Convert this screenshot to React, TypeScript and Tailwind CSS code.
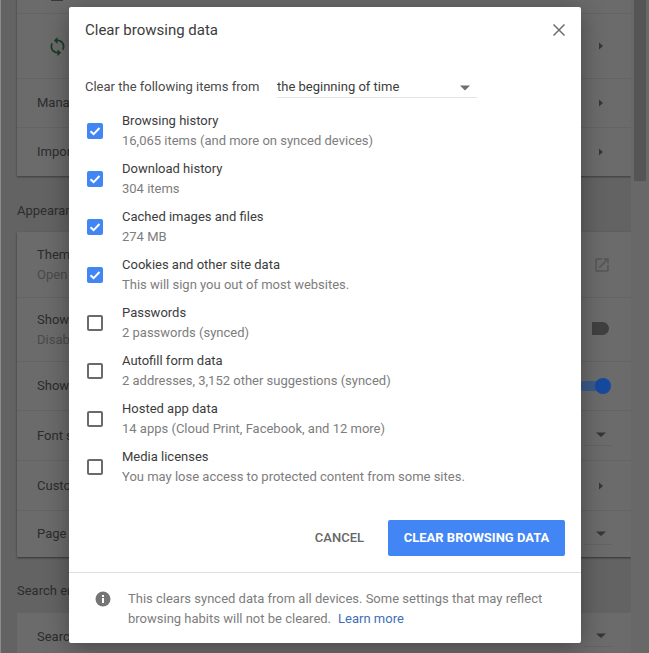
import React from 'react';

const Caret = ({ dir }: { dir: 'right' | 'down' }) => (
    <svg width="12" height="12" viewBox="0 0 12 12" className="text-[#363636]">
        {dir === 'right' ? <path d="M4 2.5 L8 6 L4 9.5 Z" fill="currentColor" /> : <path d="M1 3.5 L11 3.5 L6 8 Z" fill="currentColor" />}
    </svg>
);

// dropdown caret with the faint underline the settings selects have
const DropCaret = () => (
    <span className="mr-[-5px] flex w-[28px] border-b border-[#636363] pb-1 pl-[11px] pt-1">
        <Caret dir="down" />
    </span>
);

interface RowProps {
    height: string;
    title?: string;
    sub?: string;
    right?: React.ReactNode;
    border?: boolean;
}

const BgRow = ({ height, title, sub, right, border = true }: RowProps) => (
    <div className={`flex items-center justify-between pl-5 pr-6 ${height} ${border ? 'border-t border-[#646464]' : ''}`}>
        <div className="leading-5">
            {title && <div className="text-[13px] text-[#2c2c2c]">{title}</div>}
            {sub && <div className="text-[13px] text-[#4a4a4a]">{sub}</div>}
        </div>
        {right}
    </div>
);

const items = [
    { title: 'Browsing history', sub: '16,065 items (and more on synced devices)', checked: true },
    { title: 'Download history', sub: '304 items', checked: true },
    { title: 'Cached images and files', sub: '274 MB', checked: true },
    { title: 'Cookies and other site data', sub: 'This will sign you out of most websites.', checked: true },
    { title: 'Passwords', sub: '2 passwords (synced)', checked: false },
    { title: 'Autofill form data', sub: '2 addresses, 3,152 other suggestions (synced)', checked: false },
    { title: 'Hosted app data', sub: '14 apps (Cloud Print, Facebook, and 12 more)', checked: false },
    { title: 'Media licenses', sub: 'You may lose access to protected content from some sites.', checked: false },
];

const CheckBox = ({ checked }: { checked: boolean }) =>
    checked ? (
        <div className="flex h-4 w-4 items-center justify-center rounded-[2px] bg-[#4285f4]">
            <svg width="12" height="12" viewBox="0 0 12 12">
                <path d="M1.5 6.2 L4.6 9.2 L10.5 3" fill="none" stroke="#ffffff" strokeWidth="2" />
            </svg>
        </div>
    ) : (
        <div className="h-4 w-4 rounded-[2px] border-2 border-[#6a6a6a]" />
    );

export default function App() {
    return (
        <div className="relative h-[653px] w-[649px] overflow-hidden bg-[#636363] font-['Roboto',sans-serif]">
            {/* settings page behind the scrim */}
            <div className="flex h-full">
                <div className="h-full w-[1px] shrink-0 bg-[#8c8c8c]" />
                <div className="w-[630px] shrink-0 pl-4">
                    <div className="mt-[-20px] bg-[#6b6b6b] shadow-[0_1px_2px_rgba(0,0,0,0.4)]">
                        <div className="flex h-[33px] items-start pl-[34px]">
                            <span className="mt-[19px] h-[2px] w-[12px] bg-[#3a3a3a]" />
                        </div>
                        <div className="flex h-[65px] items-center justify-between border-t border-[#646464] pl-[30px] pr-6">
                            <svg width="21" height="21" viewBox="0 0 24 24" fill="#173d29">
                                <path d="M12 4V1L8 5l4 4V6c3.31 0 6 2.69 6 6 0 1.01-.25 1.97-.7 2.8l1.46 1.46C19.54 15.03 20 13.57 20 12c0-4.42-3.58-8-8-8zm0 14c-3.31 0-6-2.69-6-6 0-1.01.25-1.97.7-2.8L5.24 7.74C4.46 8.97 4 10.43 4 12c0 4.42 3.58 8 8 8v3l4-4-4-4v3z" />
                            </svg>
                            <Caret dir="right" />
                        </div>
                        <BgRow height="h-[49px]" title="Manage" right={<Caret dir="right" />} />
                        <BgRow height="h-[49px]" title="Import" right={<Caret dir="right" />} />
                    </div>
                    <div className="flex h-[56px] items-end pb-3 text-[13px] text-[#2c2c2c]">Appearance</div>
                    <div className="bg-[#6b6b6b] shadow-[0_1px_2px_rgba(0,0,0,0.5)]">
                        <BgRow
                            height="h-[65px]"
                            title="Themes"
                            sub="Open"
                            border={false}
                            right={
                                <svg width="18" height="18" viewBox="0 0 24 24" fill="#555555" className="mr-[-4px]">
                                    <path d="M19 19H5V5h7V3H5a2 2 0 0 0-2 2v14a2 2 0 0 0 2 2h14a2 2 0 0 0 2-2v-7h-2v7zM14 3v2h3.59l-9.83 9.83 1.41 1.41L19 6.41V10h2V3h-7z" />
                                </svg>
                            }
                        />
                        <BgRow
                            height="h-[64px]"
                            title="Show"
                            sub="Disabled"
                            right={<span className="mr-[-2px] mt-[-3px] block h-[13px] w-[17px] rounded-l-[4px] rounded-r-full bg-[#404040]" />}
                        />
                        <BgRow
                            height="h-[49px]"
                            title="Show"
                            right={
                                <span className="relative mr-[-2px] block h-[10px] w-[30px] rounded-full bg-[#3c5a88]">
                                    <span className="absolute right-[-2px] top-[-3px] h-4 w-4 rounded-full bg-[#164a9e]" />
                                </span>
                            }
                        />
                        <BgRow height="h-[50px]" title="Font size" right={<DropCaret />} />
                        <BgRow height="h-[50px]" title="Customize" right={<Caret dir="right" />} />
                        <BgRow height="h-[47px]" title="Page zoom" right={<DropCaret />} />
                    </div>
                    <div className="flex h-[56px] items-end pb-[13px] text-[13px] text-[#2c2c2c]">Search engine</div>
                    <div className="bg-[#6b6b6b]">
                        <BgRow height="h-[47px]" title="Search" border={false} right={<DropCaret />} />
                    </div>
                </div>
                <div className="flex-1 bg-[#686868] pl-[3px]">
                    <div className="h-[181px] w-[12px] bg-[#555555]" />
                </div>
            </div>

            {/* dialog */}
            <div className="absolute left-[69px] top-[7px] flex h-[636px] w-[512px] flex-col rounded-[2px] bg-white shadow-[0_4px_24px_rgba(0,0,0,0.35)]">
                <div className="flex h-[46px] items-center justify-between px-4">
                    <h1 className="text-[15px] font-normal text-[#3c3c3c]">Clear browsing data</h1>
                    <svg width="12" height="12" viewBox="0 0 12 12">
                        <path d="M0.5 0.5 L11.5 11.5 M11.5 0.5 L0.5 11.5" stroke="#6e6e6e" strokeWidth="1.5" />
                    </svg>
                </div>

                <div className="mt-6 flex h-[21px] items-start pl-4 text-[13px] leading-5 text-[#4a4a4a]">
                    <span className="w-[192px]">Clear the following items from</span>
                    <div className="flex h-[21px] w-[200px] items-center justify-between border-b border-[#e4e4e4] pr-[7px]">
                        <span className="text-[#3c3c3c]">the beginning of time</span>
                        <svg width="10" height="6" viewBox="0 0 10 6" className="mt-[1px]">
                            <path d="M0 0.5 L10 0.5 L5 5.5 Z" fill="#6e6e6e" />
                        </svg>
                    </div>
                </div>

                <div className="mt-[9px] flex flex-col pl-[18px]">
                    {items.map(item => (
                        <div key={item.title} className="flex h-12 items-center">
                            <CheckBox checked={item.checked} />
                            <div className="ml-[19px] text-[13px] leading-5">
                                <div className="text-[#3c3c3c]">{item.title}</div>
                                <div className="text-[#7d7d7d]">{item.sub}</div>
                            </div>
                        </div>
                    ))}
                </div>

                <div className="mt-[29px] flex items-center justify-end pr-4">
                    <button className="mr-6 text-[13px] font-medium text-[#666666]">CANCEL</button>
                    <button className="h-9 w-[177px] rounded-[2px] bg-[#4285f4] text-[13px] font-bold text-white">CLEAR BROWSING DATA</button>
                </div>

                <div className="mt-4 flex flex-1 border-t border-[#e0e0e0] pl-[26px] pr-4 pt-4">
                    <svg width="16" height="16" viewBox="0 0 16 16" className="mt-[2px] shrink-0">
                        <circle cx="8" cy="8" r="7.5" fill="#757575" />
                        <rect x="7" y="7" width="2" height="5" fill="#ffffff" />
                        <rect x="7" y="4" width="2" height="2" fill="#ffffff" />
                    </svg>
                    <div className="ml-[17px] text-[13px] leading-5 text-[#7d7d7d]">
                        <div>This clears synced data from all devices. Some settings that may reflect</div>
                        <div className="flex gap-[7px]">
                            <span>browsing habits will not be cleared.</span>
                            <span className="text-[#3f6fb5]">Learn more</span>
                        </div>
                    </div>
                </div>
            </div>
        </div>
    );
}
